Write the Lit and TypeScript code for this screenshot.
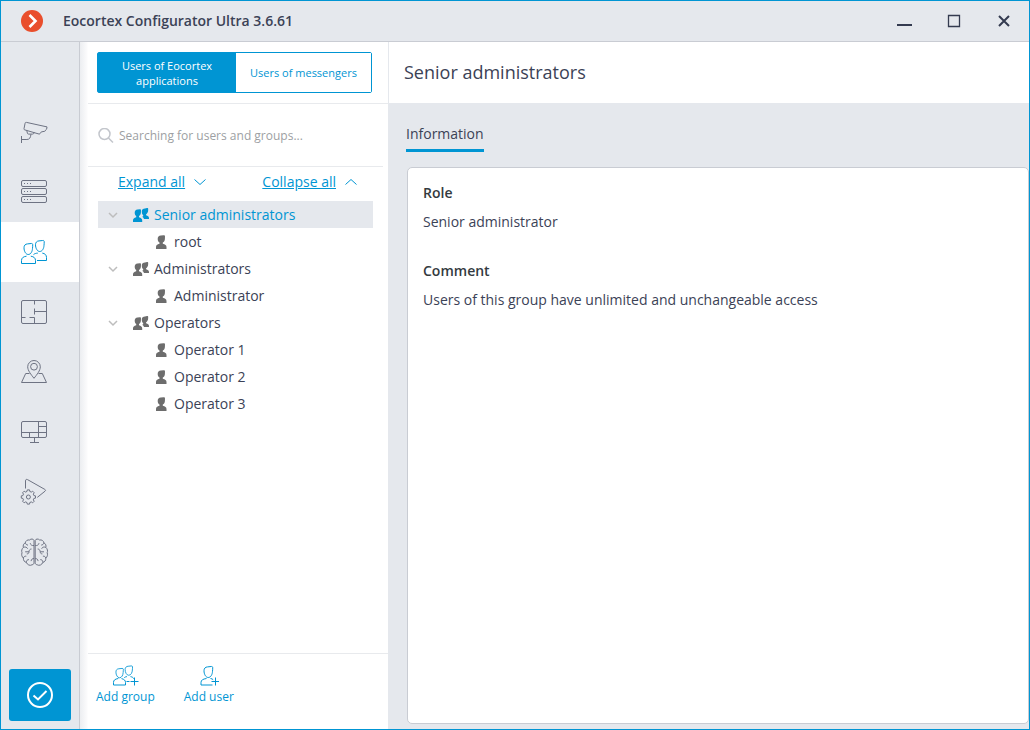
import { LitElement, html, css, svg, nothing } from "lit";
import { customElement, property, state } from "lit/decorators.js";
import { classMap } from "lit/directives/class-map.js";

interface Group {
  name: string;
  users: string[];
}

const GROUPS: Group[] = [
  { name: "Senior administrators", users: ["root"] },
  { name: "Administrators", users: ["Administrator"] },
  { name: "Operators", users: ["Operator 1", "Operator 2", "Operator 3"] },
];

const gearPath = (cx: number, cy: number, outer: number, inner: number, teeth: number) => {
  const pts: string[] = [];
  const step = (Math.PI * 2) / teeth;
  for (let i = 0; i < teeth; i++) {
    const a = i * step;
    for (const [r, o] of [[inner, -0.32], [outer, -0.2], [outer, 0.2], [inner, 0.32]]) {
      pts.push(`${(cx + r * Math.cos(a + o * step)).toFixed(2)} ${(cy + r * Math.sin(a + o * step)).toFixed(2)}`);
    }
  }
  return `M${pts.join("L")}Z`;
};

const brainHalf = svg`
  <path d="M14 2.500C13.600.9 11 .4 9.600 2 7.600 1.500 5.500 2.800 5.400 4.800 3.400 5.600 2.800 7.800 3.400 9.400 1.700 10.800 1.300 13 2 14.700 1.300 16.700 1.800 18.900 3.400 20 3.200 22.400 4.400 24 6.400 24.400 7.200 27 10.200 28 12 26.800 13.300 26.600 14 25.800 14 24.800Z"/>
  <path d="M14 7.500c-2 .3-3.400-.5-3.800-2.300M5.400 4.800c.2 1.400 1.200 2.200 2.600 2.300M3.400 9.400c1.700-.8 3.500-.3 4.200 1.300M11.500 11c-1.500 0-2.500 1.300-2.500 2.700 0 1.500-.8 2.200-2.200 2.200M9 13.800H5.200M3.400 20c.4-1.400 1.500-2 2.900-1.800M6.400 24.400c-.1-1.700.8-2.800 2.500-2.800M14 20.500c-1.800 0-2.700 1-2.900 2.600"/>`;

/* Outline of a head inside a 10 × 12 box, reused by every outlined person icon. */
const head = svg`<path d="M4 .9C1.700 1 .5 2.500.5 4.800c0 3.200 1.700 6.700 4.200 6.700 2.700 0 4.200-3.200 4.300-6.200.1-1.500.3-2.700.2-3.900C9.100.600 8.500.400 7.700.500 6.400.600 5.300.800 4 .9Z"/>`;

const usersShape = svg`
  <g transform="translate(3.500 5)">${head}</g>
  <path d="M6.500 18.200C3.200 18.600 1.500 20 1.500 22.500v3h14v-3c0-2.500-1.700-3.900-4.700-4.300"/>
  <g transform="translate(15 2)">${head}</g>
  <path d="M13.500 16.600c1-1 2.400-1.300 4.300-1.500M22.300 15.100c2.700.4 4.200 1.900 4.200 4.400v3h-9.500"/>`;

const NAV = [
  {
    label: "Cameras",
    icon: svg`<path d="M6.500 4.400c-.8-.2-1.200 0-1.400.8L4 10.700c-.1.700.1 1 .8 1.200l14.400 4.200c1.500-.2.900-2 2.600-2.300l2.900-.5c.6-.1.700-.6.800-1.200l1-.8c.3-.8.500-1.800.5-2.400Z"/>
      <path d="M6.800 12.600l.6 2.600c.2.600.5.900 1.200.9h4c.7 0 1-.3 1.300-.9l.4-.9M10.900 16.300c-.2 3-1.200 5.200-4 5.200H1.500M1.500 18v7"/>`,
  },
  {
    label: "Servers",
    icon: svg`<rect x="1.500" y="2.500" width="25" height="6" rx="1.500"/><rect x="1.500" y="10.500" width="25" height="6" rx="1.500"/><rect x="1.500" y="18.500" width="25" height="6" rx="1.500"/>
      <path d="M4 5.500h1M7 5.500h1M10 5.500h1M4 13.500h1M7 13.500h1M10 13.500h1M4 21.500h1M7 21.500h1M10 21.500h1"/>`,
  },
  { label: "Users", icon: usersShape },
  {
    label: "Floor plans",
    icon: svg`<rect x="1.500" y="2.500" width="25" height="23" rx="1.500"/>
      <path d="M14.500 2.500v4M14.500 10.500v6M14.500 13.500h12M1.500 19.500H5.500M9.500 19.500h5v6"/>`,
  },
  {
    label: "Maps",
    icon: svg`<path d="M14 20.300C11 16.500 7.700 12.500 7.700 8.800a6.300 6.300 0 0 1 12.600 0C20.300 12.500 17 16.500 14 20.300Z"/><circle cx="14" cy="8.700" r="3.400"/>
      <path d="M9.500 15.500H5.700L1.500 24.500h25l-4.200-9h-3.800"/>`,
  },
  {
    label: "Screens",
    icon: svg`<rect x="1.500" y="3.500" width="25" height="16" rx="1.500"/>
      <path d="M1.500 14.500h25M18.500 3.500v16M18.500 8.500h8M9.500 14.500v5M14.500 19.500v5M10 24.500h9"/>`,
  },
  {
    label: "Automation",
    icon: svg`<path d="M5.500 10.500V3c0-1.500.9-2 2-1.400l17.300 9.800c.9.500.9 1.200.2 1.800l-7.700 6.200"/>
      <path d=${gearPath(8.400, 19, 7.200, 5.700, 8)}/><circle cx="8.400" cy="19" r="2"/>`,
  },
  {
    label: "Analytics",
    icon: svg`${brainHalf}<g transform="matrix(-1 0 0 1 29.200 0)">${brainHalf}</g>`,
  },
];

@customElement("app-nav")
class AppNav extends LitElement {
  @state() private active = 2;

  static styles = css`
    :host { display: flex; flex-direction: column; padding: 60px 0 8px; background: #e5e8ed; border-right: 1px solid #c9ccd3; }
    nav { display: flex; flex-direction: column; flex: 1; min-height: 0; }
    .item { display: flex; align-items: center; height: 60px; padding: 0 0 0 19px; border: 0; background: none; color: #6e7383; cursor: pointer; }
    .item.active { background: #fff; color: #0095d3; }
    .item svg { width: 28px; height: 28px; fill: none; stroke: currentColor; stroke-width: 1; overflow: visible; }
    .apply { display: flex; align-items: center; justify-content: center; height: 52px; margin: 0 8px; padding: 0; border: 0; border-radius: 3px; background: #0095d3; cursor: pointer; }
    .apply svg { width: 28px; height: 28px; fill: none; stroke: #fff; stroke-width: 2; }
  `;

  render() {
    return html`
      <nav aria-label="Sections">
        ${NAV.map(
          (n, i) => html`<button
            class=${classMap({ item: true, active: i === this.active })}
            aria-label=${n.label}
            @click=${() => (this.active = i)}
          ><svg viewBox="0 0 28 28" aria-hidden="true">${n.icon}</svg></button>`
        )}
      </nav>
      <button class="apply" aria-label="Apply changes">
        <svg viewBox="0 0 28 28" aria-hidden="true"><circle cx="14" cy="14" r="12"/><path d="M7.500 14.500l4.500 4 8.500-8.500"/></svg>
      </button>
    `;
  }
}

@customElement("user-tree")
class UserTree extends LitElement {
  @property({ attribute: false }) groups: Group[] = [];
  @property() selected = "";
  @state() private closed = new Set<string>();

  static styles = css`
    :host { display: block; font: 14px/20px "Open Sans", "Noto Sans", sans-serif; color: #3b4256; }
    ul { list-style: none; margin: 0; padding: 0; }
    .actions { display: flex; justify-content: space-between; align-items: center; height: 30px; padding: 0 16px 0 20px; margin-bottom: 4px; }
    button { font: inherit; color: inherit; background: none; border: 0; padding: 0; cursor: pointer; }
    .all { display: flex; align-items: center; gap: 9px; color: #0095d3; }
    .all span { text-decoration: underline; }
    .all svg { width: 12px; height: 8px; fill: none; stroke: currentColor; }
    .row { display: flex; align-items: center; height: 27px; }
    .row.on { background: #e5e8ed; color: #0095d3; }
    .toggle { display: flex; width: 30px; padding-left: 10px; box-sizing: border-box; margin-right: 5px; }
    .toggle svg { width: 10px; height: 8px; fill: none; stroke: #bdbdbd; stroke-width: 1.500; }
    .name { display: flex; align-items: center; gap: 5px; color: inherit; }
    .name svg { height: 14px; width: 16px; fill: #6d6d6d; }
    .row.on .name svg { fill: #0095d3; }
    .user { padding-left: 57px; }
    .user .name { gap: 7px; }
    .user .name svg { width: 12px; }
  `;

  private toggle(name: string) {
    const next = new Set(this.closed);
    next.has(name) ? next.delete(name) : next.add(name);
    this.closed = next;
  }

  private select(name: string) {
    this.dispatchEvent(new CustomEvent("pick", { detail: name }));
  }

  render() {
    return html`
      <div class="actions">
        <button class="all" @click=${() => (this.closed = new Set())}>
          <span>Expand all</span><svg viewBox="0 0 12 8" aria-hidden="true"><path d="M.5 1.500 6 6.500l5.500-5"/></svg>
        </button>
        <button class="all" @click=${() => (this.closed = new Set(this.groups.map((g) => g.name)))}>
          <span>Collapse all</span><svg viewBox="0 0 12 8" aria-hidden="true"><path d="M.5 6.500 6 1.500l5.500 5"/></svg>
        </button>
      </div>
      <ul>
        ${this.groups.map(
          (g) => html`<li>
            <div class=${classMap({ row: true, on: g.name === this.selected })}>
              <button class="toggle" aria-label="Toggle ${g.name}" @click=${() => this.toggle(g.name)}>
                <svg viewBox="0 0 10 8" aria-hidden="true"><path d="M1 2l4 4 4-4"/></svg>
              </button>
              <button class="name" @click=${() => this.select(g.name)}>
                <svg viewBox="0 0 16 14" aria-hidden="true">
                  <path d="M4.500 1.500C2.700 1.600 1.700 2.900 1.700 4.700c0 1.400.6 2.600 1.500 3.400v1.100C1.100 9.700 0 10.700 0 12.300V14h9.200v-1.700c0-1.600-1.200-2.500-3.200-3.100V8.100c1-.8 1.800-2 1.900-3.400l.1-2.200c0-.9-.4-1.300-1.200-1.200Z"/>
                  <path d="M12 .4C10 .5 8.900 1.500 8.800 3l.1 2c.1.900.6 1.700 1.300 2.200v1l-1 .5c1 .6 1.600 1.300 1.800 2.300h5V9.900c0-1.500-1.200-2.100-2.900-2.600v-1c1-.8 1.900-1.900 2-3.300l.1-1.800c0-.9-.4-1.200-1.200-1.100Z"/>
                </svg>${g.name}
              </button>
            </div>
            ${this.closed.has(g.name)
              ? nothing
              : html`<ul>
                  ${g.users.map(
                    (u) => html`<li class=${classMap({ row: true, user: true, on: u === this.selected })}>
                      <button class="name" @click=${() => this.select(u)}>
                        <svg viewBox="0 0 12 14" aria-hidden="true"><path d="M5.800.5C3.800.6 2.700 1.900 2.700 3.900c0 1.600.7 2.900 1.800 3.700v1.200C2.200 9.300 1 10.300 1 12v2h10.500v-2c0-1.700-1.300-2.700-3.700-3.200V7.600c1.200-.8 2-2.100 2.100-3.700l.1-2.300c0-1-.5-1.500-1.400-1.400Z"/></svg>${u}
                      </button>
                    </li>`
                  )}
                </ul>`}
          </li>`
        )}
      </ul>
    `;
  }
}

@customElement("app-root")
class AppRoot extends LitElement {
  @state() private selected = "Senior administrators";
  @state() private source = 0;

  static styles = css`
    :host { display: block; font: 14px/20px "Open Sans", "Noto Sans", sans-serif; color: #3b4256; }
    * { box-sizing: border-box; }
    button { font: inherit; cursor: pointer; }
    .window { display: flex; flex-direction: column; height: 100vh; border: 1px solid #0095d3; background: #e5e8ed; }
    .titlebar { display: flex; align-items: center; gap: 20px; height: 41px; padding: 0 7px 0 20px; border-bottom: 1px solid #c9ccd3; }
    .logo { width: 22px; height: 22px; }
    h1 { flex: 1; margin: 0; font-size: 14px; font-weight: 600; line-height: 20px; }
    .controls { display: flex; gap: 14px; }
    .controls button { display: flex; align-items: center; justify-content: center; width: 36px; height: 32px; padding: 0; border: 0; background: none; color: #343b50; }
    .controls svg { width: 16px; height: 16px; fill: none; stroke: currentColor; stroke-width: 2; }
    .body { display: grid; grid-template-columns: 79px 309px minmax(0, 1fr); flex: 1; min-height: 0; }
    .panel { display: flex; flex-direction: column; min-height: 0; padding-left: 8px; background: linear-gradient(to right, #eceef1, #fbfbfc 7px, #fff 8px); border-right: 1px solid #e5e8ed; }
    .source { height: 62px; padding: 10px 16px 10px 9px; border-bottom: 1px solid #e8eaed; }
    .switch { display: grid; grid-template-columns: 138px 1fr; height: 41px; border: 1px solid #0095d3; border-radius: 2px; }
    .switch button { padding: 0 16px; border: 0; background: #fff; color: #0095d3; font-size: 11px; line-height: 15px; }
    .switch button + button { padding: 0; }
    .switch button.on { background: #0095d3; color: #fff; }
    .search { display: flex; align-items: center; gap: 5px; height: 63px; margin-right: 5px; padding: 2px 0 0 10px; border-bottom: 1px solid #e8eaed; }
    .search svg { width: 16px; height: 16px; fill: none; stroke: #c3c6cc; stroke-width: 1.500; }
    .search input { flex: 1; min-width: 0; padding: 0; border: 0; outline: 0; background: none; font: 12px/20px "Open Sans", "Noto Sans", sans-serif; color: #3b4256; }
    .search input::placeholder { color: #9d9fa3; opacity: 1; }
    user-tree { flex: 1; min-height: 0; overflow: auto; padding: 0 15px 0 10px; }
    .adders { display: flex; gap: 29px; height: 76px; padding: 10px 8px 0; border-top: 1px solid #e8eaed; }
    .adders button { display: flex; flex-direction: column; align-items: center; height: 42px; padding: 0; border: 0; background: none; color: #0095d3; font-size: 12px; line-height: 18px; }
    .adders svg { height: 24px; fill: none; stroke: currentColor; stroke-width: 1; }
    main { display: flex; flex-direction: column; min-width: 0; min-height: 0; }
    h2 { height: 61px; margin: 0; padding: 18px 15px; background: #fff; font-size: 18px; font-weight: 400; line-height: 24px; }
    .tabs { display: flex; padding: 18px 0 0 17px; }
    .tab { height: 31px; padding: 0 0 2px; border: 0; border-bottom: 3px solid #0095d3; background: none; color: #3b4256; font-size: 14px; line-height: 20px; }
    .card { flex: 1; min-height: 0; overflow: auto; margin: 15px 0 5px 18px; padding: 15px; border: 1px solid #c9ccd3; border-radius: 5px; background: #fff; }
    dl { margin: 0; }
    dt { font-weight: 600; color: #333a40; margin-bottom: 9px; }
    dd { margin: 0 0 29px; }
  `;

  render() {
    return html`
      <div class="window">
        <header class="titlebar">
          <svg class="logo" viewBox="0 0 22 22" aria-hidden="true"><circle cx="11" cy="11" r="11" fill="#e94e2c"/><path d="M8.500 5l6 6-6 6" fill="none" stroke="#fff" stroke-width="2.600"/></svg>
          <h1>Eocortex Configurator Ultra 3.6.61</h1>
          <div class="controls">
            <button aria-label="Minimize"><svg viewBox="0 0 16 16"><path d="M1 12h15"/></svg></button>
            <button aria-label="Maximize"><svg viewBox="0 0 16 16"><path stroke-width="1.300" d="M2.500 2.500h11v11h-11z"/></svg></button>
            <button aria-label="Close"><svg viewBox="0 0 16 16"><path d="M3 3l10 10M13 3L3 13"/></svg></button>
          </div>
        </header>
        <div class="body">
          <app-nav></app-nav>
          <section class="panel">
            <div class="source">
              <div class="switch">
                ${["Users of Eocortex applications", "Users of messengers"].map(
                  (t, i) => html`<button class=${classMap({ on: this.source === i })} @click=${() => (this.source = i)}>${t}</button>`
                )}
              </div>
            </div>
            <label class="search">
              <svg viewBox="0 0 16 16" aria-hidden="true"><circle cx="6.500" cy="6" r="5.500"/><path d="M10.500 10l4.500 4.500"/></svg>
              <input type="text" aria-label="Search" placeholder="Searching for users and groups..." />
            </label>
            <user-tree
              .groups=${GROUPS}
              .selected=${this.selected}
              @pick=${(e: CustomEvent<string>) => (this.selected = e.detail)}
            ></user-tree>
            <div class="adders">
              <button>
                <svg width="28" viewBox="0 0 28 24" aria-hidden="true">
                  <g transform="translate(4.500 4) scale(.85)">${head}</g>
                  <path d="M7.300 14.500C4 15 2.500 16.200 2.500 18.500V21H14.500v-2.500c0-2-1.200-3.300-4-3.900"/>
                  <g transform="translate(13.700 1.500) scale(.85)">${head}</g>
                  <path d="M13.300 13.600c.8-.6 1.500-.8 2.600-1M19.500 12.600c1.700.3 2.800 1 3.300 2.100M15.500 17.500h3M19.500 17.500h8M23.500 13.500v8"/>
                </svg>
                Add group
              </button>
              <button>
                <svg width="20" viewBox="0 0 20 24" aria-hidden="true">
                  <g transform="translate(4.500 2)">${head}</g>
                  <path d="M7.500 14.500C4 15 2 16 2 18.500V21H13.500M11.500 14.500c1.200.2 2 .5 2.700 1.200M12.500 17.500h8M16.500 13.500v8"/>
                </svg>
                Add user
              </button>
            </div>
          </section>
          <main>
            <h2>${this.selected}</h2>
            <div class="tabs"><button class="tab">Information</button></div>
            <section class="card">
              <dl>
                <dt>Role</dt>
                <dd>Senior administrator</dd>
                <dt>Comment</dt>
                <dd>Users of this group have unlimited and unchangeable access</dd>
              </dl>
            </section>
          </main>
        </div>
      </div>
    `;
  }
}
